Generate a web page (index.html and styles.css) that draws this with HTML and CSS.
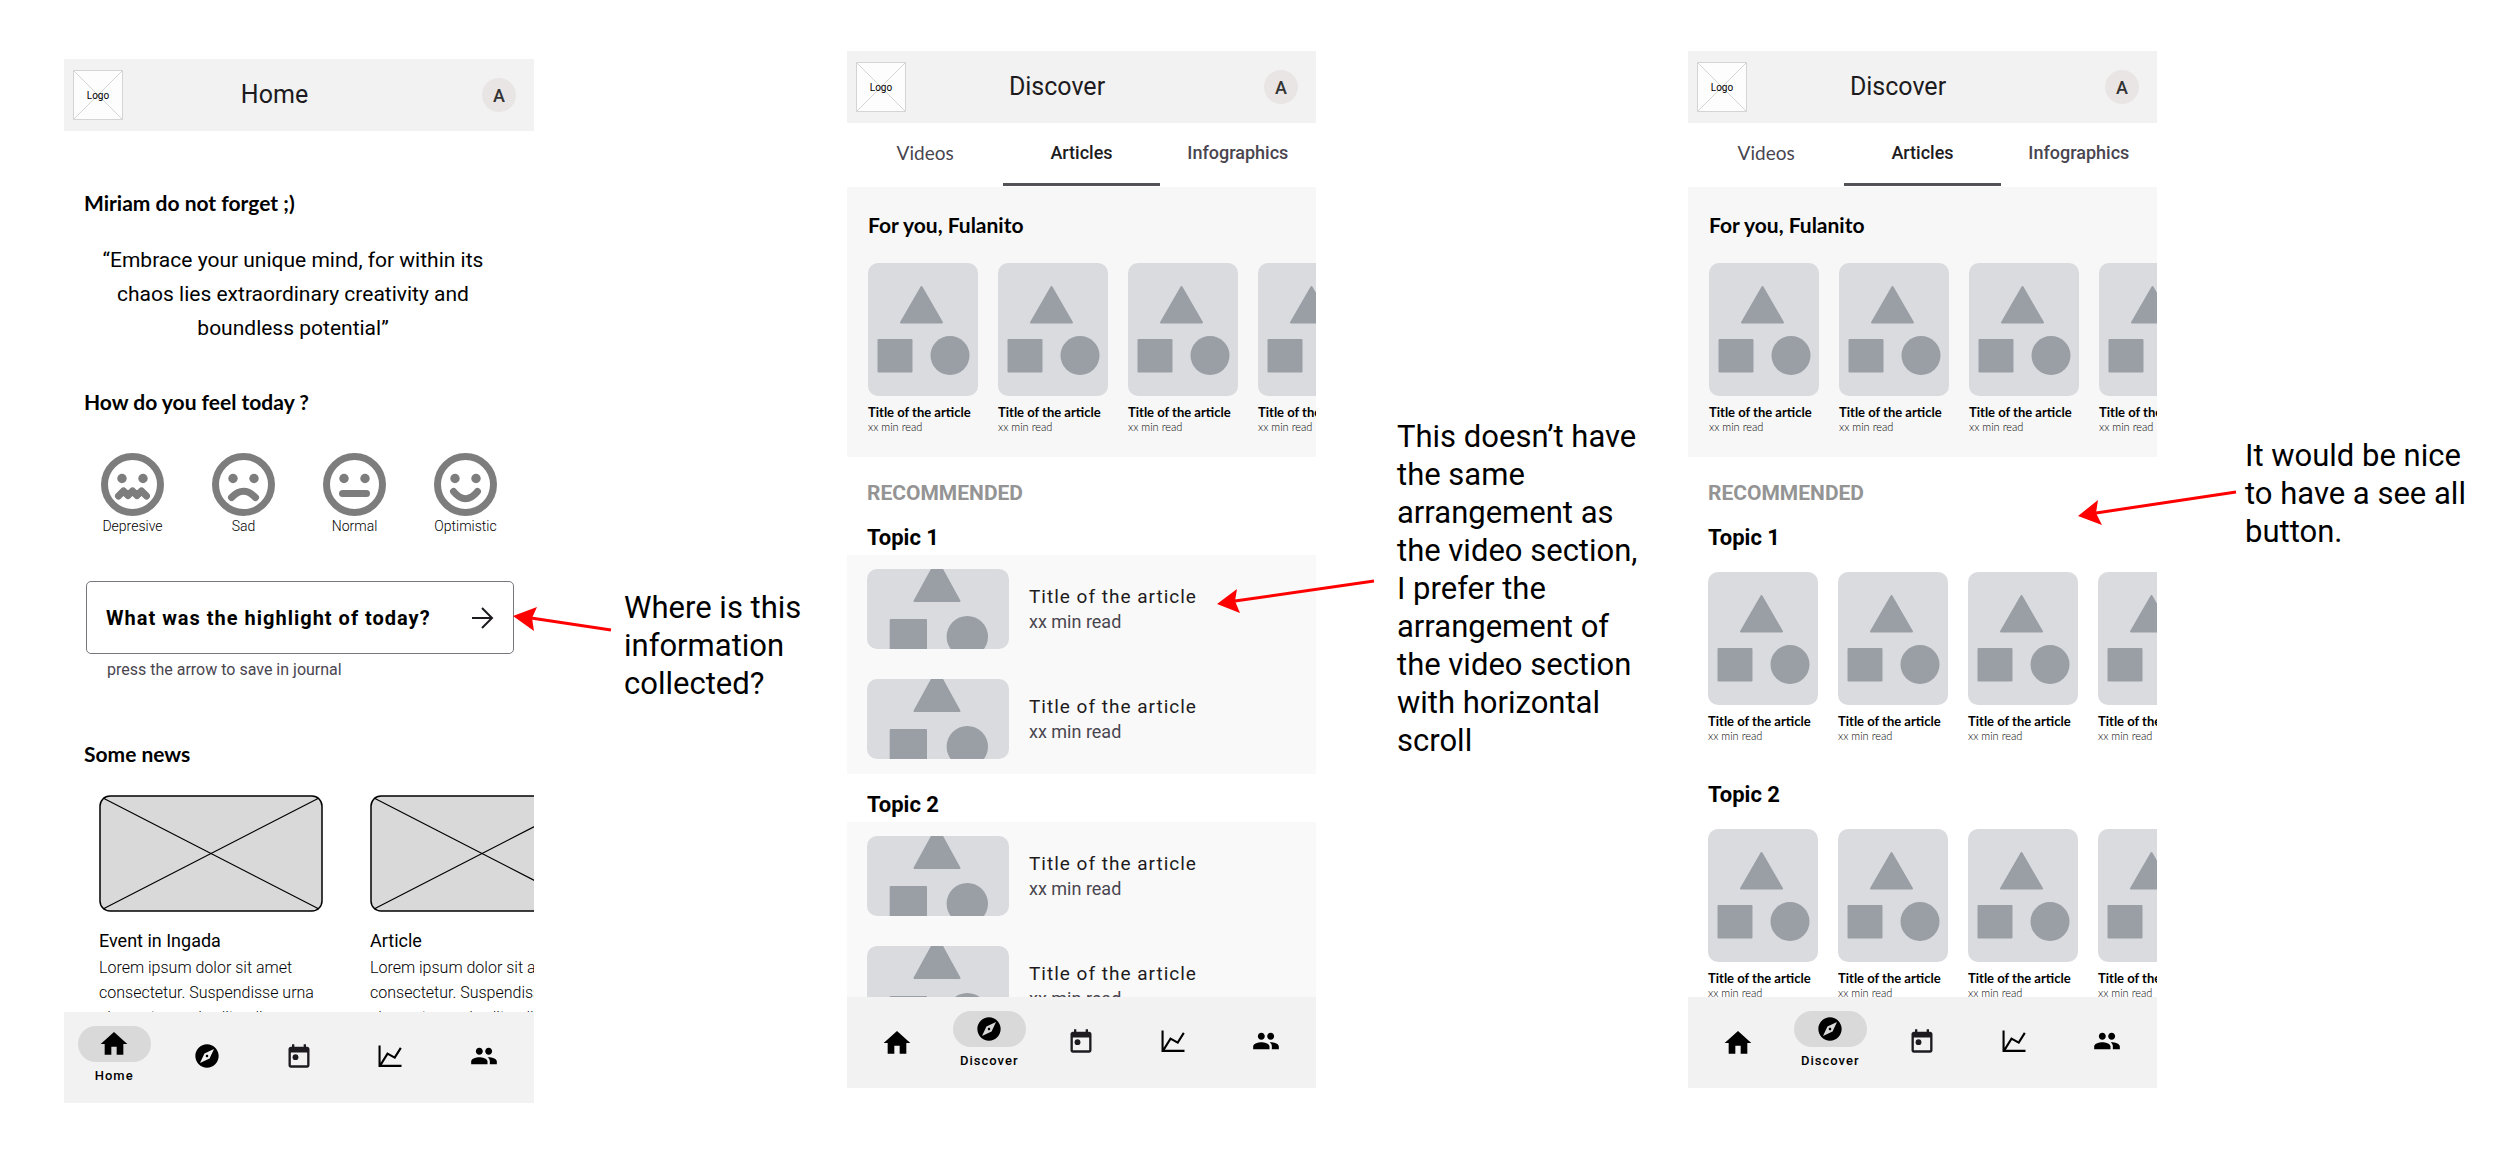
FILE: index.html
```html
<!DOCTYPE html>
<html lang="en">
<head>
    <meta charset="UTF-8">
    <meta name="viewport" content="width=device-width, initial-scale=1">
    <title>App wireframes - feedback</title>
    <link rel="stylesheet" href="styles.css">
</head>
<body>
<!-- shared icons -->
<svg class="defs" aria-hidden="true">
    <symbol id="home" viewBox="0 0 24 24"><path d="M10 20v-6h4v6h5v-8h3L12 3 2 12h3v8z"/></symbol>
    <symbol id="compass" viewBox="0 0 24 24"><path d="M12 10.9c-.61 0-1.1.49-1.1 1.1s.49 1.1 1.1 1.1c.61 0 1.1-.49 1.1-1.1s-.49-1.1-1.1-1.1zM12 2C6.48 2 2 6.48 2 12s4.48 10 10 10 10-4.48 10-10S17.52 2 12 2zm2.19 12.19L6 18l3.81-8.19L18 6l-3.81 8.19z"/></symbol>
    <symbol id="calendar" viewBox="0 0 24 24"><path fill="#1d1b20" d="M19 4h-1V2h-2v2H8V2H6v2H5c-1.1 0-2 .9-2 2v14c0 1.1.9 2 2 2h14c1.1 0 2-.9 2-2V6c0-1.1-.9-2-2-2zm0 16H5V9h14v11z"/><circle fill="#1d1b20" cx="9" cy="13" r="2.5"/></symbol>
    <symbol id="chart" viewBox="0 0 24 24"><path fill="none" stroke="#000" stroke-width="1.8" d="M2.200 3v17.500H21M2.800 20l6.200-10 6.200 3.400 5.200-8.400"/></symbol>
    <symbol id="people" viewBox="0 0 24 24"><path d="M16 11c1.66 0 2.99-1.34 2.99-3S17.66 5 16 5s-3 1.34-3 3 1.34 3 3 3zm-8 0c1.66 0 2.99-1.34 2.99-3S9.66 5 8 5 5 6.34 5 8s1.34 3 3 3zm0 2c-2.33 0-7 1.17-7 3.5V19h14v-2.5c0-2.33-4.67-3.5-7-3.5zm8 0c-.29 0-.62.02-.97.05 1.16.84 1.97 1.97 1.97 3.45V19h6v-2.5c0-2.33-4.67-3.5-7-3.5z"/></symbol>
    <symbol id="logo" viewBox="0 0 50 50"><path fill="#fdfdfd" stroke="#d4d4d4" d="M.5.5h49v49H.5zl49 49M49.500.5l-49 49"/></symbol>
    <symbol id="cross" viewBox="0 0 224 117"><rect x="1" y="1" width="222" height="115" rx="10" fill="#d9d9d9" stroke="#000" stroke-width="1.5"/><path stroke="#000" stroke-width="1.2" d="M4 3l216 111M220 3L4 114"/></symbol>
    <symbol id="shapes" viewBox="0 0 110 133"><g fill="#9a9fa6" stroke="#9a9fa6" stroke-width="2" stroke-linejoin="round"><path d="M53.500 24l20.500 35.500H33z"/><path d="M10.500 77h33v31.500h-33z"/></g><circle fill="#9a9fa6" cx="82" cy="92.500" r="19.500"/></symbol>
    <symbol id="shapes-wide" viewBox="0 0 142 80"><g fill="#9a9fa6" stroke="#9a9fa6" stroke-width="2" stroke-linejoin="round"><path d="M70-9l22.500 41h-45z"/><path d="M23.700 51H59v40H23.700z"/></g><circle fill="#9a9fa6" cx="100.300" cy="67.700" r="20.700"/></symbol>
</svg>

<div class="board">

    <!-- 1. Home -->
    <section class="phone phone-home">
        <header class="topbar">
            <div class="logo"><svg><use href="#logo"/></svg><span>Logo</span></div>
            <h1>Home</h1>
            <button class="avatar">A</button>
        </header>
        <div class="screen">
            <h2 class="hello">Miriam do not forget ;)</h2>
            <p class="quote">“Embrace your unique mind, for within its chaos lies extraordinary creativity and boundless potential”</p>
            <h2 class="feel">How do you feel today ?</h2>
            <div class="moods">
                <button class="mood">
                    <svg viewBox="0 0 63 63"><circle class="ring" cx="31.500" cy="31.500" r="28"/><circle cx="21" cy="25.500" r="4.700"/><circle cx="42" cy="25.500" r="4.700"/><path class="mouth" d="M17.500 43l5-5 4.500 4.500 4.500-4.500 4.500 4.500 4.500-4.500 5 5"/></svg>
                    Depresive
                </button>
                <button class="mood">
                    <svg viewBox="0 0 63 63"><circle class="ring" cx="31.500" cy="31.500" r="28"/><circle cx="21" cy="25.500" r="4.700"/><circle cx="42" cy="25.500" r="4.700"/><path class="mouth" d="M19.500 44.500q12-12.500 24 0"/></svg>
                    Sad
                </button>
                <button class="mood">
                    <svg viewBox="0 0 63 63"><circle class="ring" cx="31.500" cy="31.500" r="28"/><circle cx="21" cy="25.500" r="4.700"/><circle cx="42" cy="25.500" r="4.700"/><path class="mouth" d="M19.500 40.500h24"/></svg>
                    Normal
                </button>
                <button class="mood">
                    <svg viewBox="0 0 63 63"><circle class="ring" cx="31.500" cy="31.500" r="28"/><circle cx="21" cy="25.500" r="4.700"/><circle cx="42" cy="25.500" r="4.700"/><path class="mouth" d="M19.500 38.500q12 14.500 24 0"/></svg>
                    Optimistic
                </button>
            </div>
            <form class="journal">
                <div class="field">
                    <input type="text" id="highlight" placeholder="What was the highlight of today?">
                    <button type="button" aria-label="Save"><svg viewBox="0 0 22 22"><path d="M0 11h20M10 1l10 10-10 10"/></svg></button>
                </div>
                <label for="highlight">press the arrow to save in journal</label>
            </form>
            <h2 class="news-title">Some news</h2>
            <div class="news">
                <article>
                    <svg><use href="#cross"/></svg>
                    <h3>Event in Ingada</h3>
                    <p>Lorem ipsum dolor sit amet consectetur. Suspendisse urna elementum vel velit nulla</p>
                </article>
                <article>
                    <svg><use href="#cross"/></svg>
                    <h3>Article</h3>
                    <p>Lorem ipsum dolor sit amet consectetur. Suspendisse urna elementum vel velit nulla</p>
                </article>
            </div>
        </div>
        <nav class="bottom-nav">
            <a class="active" href="#"><span class="pill"><svg class="big"><use href="#home"/></svg></span>Home</a>
            <a href="#" aria-label="Discover"><svg><use href="#compass"/></svg></a>
            <a href="#" aria-label="Calendar"><svg><use href="#calendar"/></svg></a>
            <a href="#" aria-label="Stats"><svg><use href="#chart"/></svg></a>
            <a href="#" aria-label="Community"><svg><use href="#people"/></svg></a>
        </nav>
    </section>

    <aside class="note note-1">
        <svg class="arrow" viewBox="0 0 100 28"><path class="line" d="M18 9l80 12"/><path class="head" d="M0 7l24-9-5 11 2 13z"/></svg>
        <p>Where is this information collected?</p>
    </aside>

    <!-- 2. Discover, articles as a list -->
    <section class="phone">
        <header class="topbar">
            <div class="logo"><svg><use href="#logo"/></svg><span>Logo</span></div>
            <h1>Discover</h1>
            <button class="avatar">A</button>
        </header>
        <div class="screen">
            <div class="tabs">
                <a class="videos" href="#">Videos</a>
                <a class="current" href="#">Articles</a>
                <a href="#">Infographics</a>
            </div>
            <div class="for-you">
                <h2>For you, Fulanito</h2>
                <div class="cards">
                    <article><svg><use href="#shapes"/></svg><h4>Title of the article</h4><p>xx min read</p></article>
                    <article><svg><use href="#shapes"/></svg><h4>Title of the article</h4><p>xx min read</p></article>
                    <article><svg><use href="#shapes"/></svg><h4>Title of the article</h4><p>xx min read</p></article>
                    <article><svg><use href="#shapes"/></svg><h4>Title of the article</h4><p>xx min read</p></article>
                </div>
            </div>
            <h2 class="recommended">RECOMMENDED</h2>
            <h3 class="topic">Topic 1</h3>
            <ul class="list">
                <li><svg><use href="#shapes-wide"/></svg><div><h4>Title of the article</h4><p>xx min read</p></div></li>
                <li><svg><use href="#shapes-wide"/></svg><div><h4>Title of the article</h4><p>xx min read</p></div></li>
            </ul>
            <h3 class="topic">Topic 2</h3>
            <ul class="list">
                <li><svg><use href="#shapes-wide"/></svg><div><h4>Title of the article</h4><p>xx min read</p></div></li>
                <li><svg><use href="#shapes-wide"/></svg><div><h4>Title of the article</h4><p>xx min read</p></div></li>
            </ul>
        </div>
        <nav class="bottom-nav">
            <a href="#" aria-label="Home"><svg class="big"><use href="#home"/></svg></a>
            <a class="active" href="#"><span class="pill"><svg><use href="#compass"/></svg></span>Discover</a>
            <a href="#" aria-label="Calendar"><svg><use href="#calendar"/></svg></a>
            <a href="#" aria-label="Stats"><svg><use href="#chart"/></svg></a>
            <a href="#" aria-label="Community"><svg><use href="#people"/></svg></a>
        </nav>
    </section>

    <aside class="note note-2">
        <svg class="arrow" viewBox="0 0 158 34"><path class="line" d="M18 22L157 2"/><path class="head" d="M0 25L20 10l-2 12 5 12z"/></svg>
        <p>This doesn’t have the same arrangement as the video section, I prefer the arrangement of the video section with horizontal scroll</p>
    </aside>

    <!-- 3. Discover, articles with horizontal scroll -->
    <section class="phone">
        <header class="topbar">
            <div class="logo"><svg><use href="#logo"/></svg><span>Logo</span></div>
            <h1>Discover</h1>
            <button class="avatar">A</button>
        </header>
        <div class="screen">
            <div class="tabs">
                <a class="videos" href="#">Videos</a>
                <a class="current" href="#">Articles</a>
                <a href="#">Infographics</a>
            </div>
            <div class="for-you">
                <h2>For you, Fulanito</h2>
                <div class="cards">
                    <article><svg><use href="#shapes"/></svg><h4>Title of the article</h4><p>xx min read</p></article>
                    <article><svg><use href="#shapes"/></svg><h4>Title of the article</h4><p>xx min read</p></article>
                    <article><svg><use href="#shapes"/></svg><h4>Title of the article</h4><p>xx min read</p></article>
                    <article><svg><use href="#shapes"/></svg><h4>Title of the article</h4><p>xx min read</p></article>
                </div>
            </div>
            <h2 class="recommended">RECOMMENDED</h2>
            <div class="row">
                <h3 class="topic">Topic 1</h3>
                <div class="cards">
                    <article><svg><use href="#shapes"/></svg><h4>Title of the article</h4><p>xx min read</p></article>
                    <article><svg><use href="#shapes"/></svg><h4>Title of the article</h4><p>xx min read</p></article>
                    <article><svg><use href="#shapes"/></svg><h4>Title of the article</h4><p>xx min read</p></article>
                    <article><svg><use href="#shapes"/></svg><h4>Title of the article</h4><p>xx min read</p></article>
                </div>
            </div>
            <div class="row">
                <h3 class="topic">Topic 2</h3>
                <div class="cards">
                    <article><svg><use href="#shapes"/></svg><h4>Title of the article</h4><p>xx min read</p></article>
                    <article><svg><use href="#shapes"/></svg><h4>Title of the article</h4><p>xx min read</p></article>
                    <article><svg><use href="#shapes"/></svg><h4>Title of the article</h4><p>xx min read</p></article>
                    <article><svg><use href="#shapes"/></svg><h4>Title of the article</h4><p>xx min read</p></article>
                </div>
            </div>
        </div>
        <nav class="bottom-nav">
            <a href="#" aria-label="Home"><svg class="big"><use href="#home"/></svg></a>
            <a class="active" href="#"><span class="pill"><svg><use href="#compass"/></svg></span>Discover</a>
            <a href="#" aria-label="Calendar"><svg><use href="#calendar"/></svg></a>
            <a href="#" aria-label="Stats"><svg><use href="#chart"/></svg></a>
            <a href="#" aria-label="Community"><svg><use href="#people"/></svg></a>
        </nav>
    </section>

    <aside class="note note-3">
        <svg class="arrow" viewBox="0 0 160 34"><path class="line" d="M18 22L158 1"/><path class="head" d="M0 25L20 9l-2 13 6 12z"/></svg>
        <p>It would be nice to have a see all button.</p>
    </aside>

</div>
</body>
</html>
```
FILE: styles.css
```css
* {
    box-sizing: border-box;
}
body {
    margin: 0;
    background: #fff;
    color: #000;
    font-family: Roboto, sans-serif;
}
h1, h2, h3, h4, p, ul {
    margin: 0;
    padding: 0;
}
button, input {
    font: inherit;
    color: inherit;
    background: none;
    border: 0;
    padding: 0;
}
a {
    color: inherit;
    text-decoration: none;
}
.defs {
    position: absolute;
    width: 0;
    height: 0;
}

/* board: three phones, each followed by its note */
.board {
    display: grid;
    grid-template-columns: 470fr 313fr 469fr 372fr 469fr 343fr;
    align-items: start;
    padding: 51px 0 46px 64px;
}
.phone {
    min-width: 0;
    overflow: hidden;
}
.phone-home {
    margin-top: 8px;
}
.screen {
    height: 874px;
    overflow: hidden;
}
.phone-home .screen {
    height: 881px;
}

/* top bar */
.topbar {
    display: flex;
    align-items: center;
    height: 72px;
    padding: 0 18px 0 9px;
    background: #f2f2f2;
}
.logo {
    display: grid;
    place-items: center;
    width: 50px;
    height: 50px;
    font-size: 10px;
}
.logo svg, .logo span {
    grid-area: 1 / 1;
}
.logo svg {
    width: 50px;
    height: 50px;
}
.topbar h1 {
    flex: 1;
    margin: 0 56px 2px 0;
    font-size: 25px;
    font-weight: 400;
    text-align: center;
    color: #1d1b20;
}
.avatar {
    width: 34px;
    height: 34px;
    border-radius: 50%;
    background: #e9e5e5;
    font-size: 18px;
    font-weight: 500;
    color: #333;
}

/* headings */
h2 {
    font: 700 21px/28px Lato, sans-serif;
}
.phone-home h2 {
    padding-left: 20px;
}
.hello {
    margin-top: 58px;
}
.quote {
    margin: 26px 0 43px;
    padding: 0 42px 0 30px;
    font-size: 21px;
    line-height: 34px;
    text-align: center;
}

/* moods */
.moods {
    display: grid;
    grid-template-columns: repeat(4, 1fr);
    margin: 37px 0 47px;
    padding: 0 13px;
}
.mood {
    display: flex;
    flex-direction: column;
    align-items: center;
    gap: 2px;
    font-size: 14px;
    font-weight: 300;
    line-height: 16px;
}
.mood svg {
    width: 63px;
    height: 63px;
    fill: #7d7d7d;
}
.mood .ring, .mood .mouth {
    fill: none;
    stroke: #7d7d7d;
    stroke-width: 7;
    stroke-linecap: round;
    stroke-linejoin: round;
}

/* journal */
.journal {
    padding: 0 20px 0 22px;
}
.field {
    display: flex;
    align-items: center;
    height: 73px;
    padding: 0 19px;
    border: 1px solid #79747e;
    border-radius: 5px;
}
.field input {
    flex: 1;
    min-width: 0;
    font-size: 20px;
    font-weight: 700;
    letter-spacing: 1px;
    outline: none;
}
.field input::placeholder {
    color: #000;
    opacity: 1;
}
.field svg {
    display: block;
    width: 22px;
    height: 22px;
    fill: none;
    stroke: #1d1b20;
    stroke-width: 2;
}
.journal label {
    display: block;
    margin-top: 6px;
    padding-left: 21px;
    font-size: 16px;
    line-height: 20px;
    color: #49454f;
}

/* news */
.news-title {
    margin-top: 60px;
}
.news {
    display: flex;
    gap: 47px;
    margin-top: 27px;
    padding-left: 35px;
}
.news article {
    flex: none;
    width: 224px;
}
.news svg {
    display: block;
    width: 224px;
    height: 117px;
}
.news h3 {
    margin: 17px 0 2px;
    font-size: 18px;
    font-weight: 400;
    line-height: 24px;
}
.news p {
    font-size: 16px;
    font-weight: 300;
    line-height: 25px;
}

/* bottom navigation */
.bottom-nav {
    display: grid;
    grid-template-columns: repeat(5, 1fr);
    height: 91px;
    padding: 0 4px;
    background: #f2f2f2;
}
.bottom-nav a {
    display: flex;
    flex-direction: column;
    align-items: center;
    padding-top: 30px;
    font-size: 13px;
    font-weight: 500;
    line-height: 20px;
    letter-spacing: 1px;
}
.bottom-nav svg {
    width: 28px;
    height: 28px;
}
.bottom-nav .big {
    width: 32px;
    height: 32px;
}
.bottom-nav .active {
    gap: 4px;
    padding-top: 14px;
}
.pill {
    display: flex;
    align-items: center;
    justify-content: center;
    width: 73px;
    height: 36px;
    border-radius: 18px;
    background: #d9d9d9;
}

/* tabs */
.tabs {
    display: grid;
    grid-template-columns: repeat(3, 1fr);
    height: 64px;
    padding-bottom: 1px;
    font-size: 18px;
    font-weight: 500;
    line-height: 59px;
    text-align: center;
    color: #49454f;
}
.tabs .videos {
    font-family: Lato, sans-serif;
    font-size: 19px;
    font-weight: 400;
}
.tabs .current {
    border-bottom: 3px solid #545257;
    color: #1d1b20;
}

/* article cards */
.for-you {
    padding: 24px 0 23px;
    background: #f7f7f7;
}
.for-you h2 {
    padding-left: 21px;
}
.cards {
    display: flex;
    gap: 20px;
    margin-top: 24px;
    padding-left: 21px;
}
.cards article {
    flex: none;
    width: 110px;
}
.cards svg {
    display: block;
    width: 110px;
    height: 133px;
    margin-bottom: 8px;
    border-radius: 10px;
    background: #dadbdf;
}
.cards h4 {
    font: 700 13px/16px Lato, sans-serif;
    white-space: nowrap;
}
.cards p {
    font: 300 11px/14px Lato, sans-serif;
}
.recommended {
    margin: 22px 0 17px;
    padding-left: 20px;
    font: 700 21px/28px Roboto, sans-serif;
    color: #949494;
}
.topic {
    padding-left: 20px;
    font-size: 22px;
    font-weight: 700;
    line-height: 28px;
}
.row .cards {
    margin: 20px 0 38px;
    padding-left: 20px;
}

/* article list */
.list {
    display: grid;
    gap: 30px;
    margin: 3px 0 17px;
    padding: 14px 0 15px 20px;
    list-style: none;
    background: #f9f9f9;
}
.list li {
    display: flex;
    align-items: center;
    gap: 20px;
}
.list svg {
    width: 142px;
    height: 80px;
    border-radius: 10px;
    background: #dadbdf;
}
.list h4 {
    font-size: 19px;
    font-weight: 400;
    line-height: 26px;
    letter-spacing: 1px;
    color: #1d1b20;
}
.list p {
    font-size: 18px;
    line-height: 24px;
    color: #49454f;
}

/* notes on the canvas */
.note {
    position: relative;
    font-size: 31px;
    line-height: 38px;
}
.note-1 {
    padding: 538px 0 0 90px;
}
.note-2 {
    padding: 367px 0 0 81px;
}
.note-3 {
    padding: 386px 0 0 88px;
}
.note-1 p {
    max-width: 200px;
}
.note-2 p {
    max-width: 250px;
}
.note-3 p {
    max-width: 230px;
}
.arrow {
    position: absolute;
    overflow: visible;
}
.arrow .line {
    stroke: #f00;
    stroke-width: 3;
}
.arrow .head {
    fill: #f00;
}
.note-1 .arrow {
    top: 558px;
    left: -21px;
    width: 100px;
    height: 28px;
}
.note-2 .arrow {
    top: 528px;
    left: -99px;
    width: 158px;
    height: 34px;
}
.note-3 .arrow {
    top: 440px;
    left: -79px;
    width: 160px;
    height: 34px;
}
```
